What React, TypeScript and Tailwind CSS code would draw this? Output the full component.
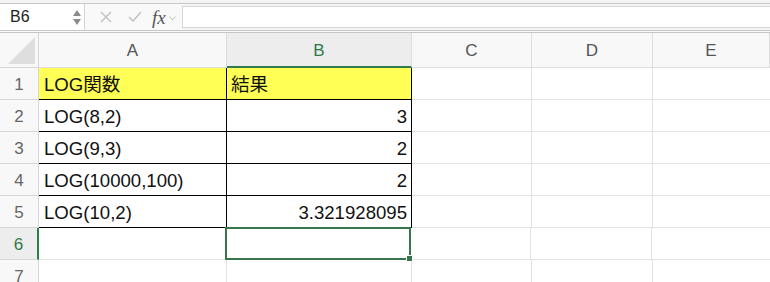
import React from "react";

const cols = [
  { key: "A", w: "w-[188px]" },
  { key: "B", w: "w-[185px]" },
  { key: "C", w: "w-[120px]" },
  { key: "D", w: "w-[121px]" },
  { key: "E", w: "flex-1" },
];

const rows: { a: string; b: string; head?: boolean }[] = [
  { a: "LOG関数", b: "結果", head: true },
  { a: "LOG(8,2)", b: "3" },
  { a: "LOG(9,3)", b: "2" },
  { a: "LOG(10000,100)", b: "2" },
  { a: "LOG(10,2)", b: "3.321928095" },
];

const font = "font-['Liberation_Sans','Noto_Sans_CJK_JP',sans-serif]";

function FormulaBar() {
  return (
    <div className="h-[33px] bg-[#f4f4f4] flex flex-col">
      <div className="h-[4px] border-b border-[#c9c9c9]" />
      <div className="flex h-[26px]">
        {/* 名前ボックス */}
        <div className="w-[85px] bg-white flex items-center border-r border-[#d4d4d4]">
          <span className="pl-[10px] text-[16px] text-[#222] flex-1">B6</span>
          <div className="flex flex-col items-center pr-[3px] gap-[3px]">
            <svg width="8" height="6" viewBox="0 0 8 6">
              <path d="M4 0 L8 6 L0 6 Z" fill="#8a8a8a" />
            </svg>
            <svg width="8" height="6" viewBox="0 0 8 6">
              <path d="M0 0 L8 0 L4 6 Z" fill="#8a8a8a" />
            </svg>
          </div>
        </div>
        <div className="w-[97px] flex items-center bg-[#f9f9f9]">
          <svg className="ml-[15px]" width="12" height="12" viewBox="0 0 12 12">
            <path d="M1 1 L11 11 M11 1 L1 11" stroke="#c4c4c4" strokeWidth="1.6" />
          </svg>
          <svg className="ml-[16px]" width="14" height="12" viewBox="0 0 14 12">
            <path d="M1 6 L5 10 L13 1" stroke="#c4c4c4" strokeWidth="1.6" fill="none" />
          </svg>
          <span className="ml-[10px] text-[19px] italic text-[#555] font-['Liberation_Serif',serif] leading-none">
            fx
          </span>
          <svg className="ml-[3px] mt-[3px]" width="7" height="5" viewBox="0 0 7 5">
            <path d="M0.5 0.5 L3.5 4 L6.5 0.5" stroke="#bdbdbd" strokeWidth="1" fill="none" />
          </svg>
        </div>
        <div className="flex-1 bg-white border border-[#d6d6d6] my-[2px] border-r-0" />
      </div>
      <div className="h-[3px] border-t border-b border-[#c6c6c6] bg-[#fafafa]" />
    </div>
  );
}

function HeaderRow() {
  return (
    <div className="flex h-[35px] bg-[#f8f8f8]">
      <div className="w-[39px] border-r border-b border-[#d6d6d6] flex items-end justify-end pr-[3px] pb-[3px]">
        <svg width="27" height="27" viewBox="0 0 27 27">
          <path d="M27 0 L27 27 L0 27 Z" fill="#dedede" />
        </svg>
      </div>
      {cols.map((c) =>
        c.key === "B" ? (
          <div
            key={c.key}
            className={`${c.w} bg-[#ededed] border-r border-[#dcdcdc] border-b-2 border-b-[#2e7a4a] flex items-center justify-center pt-[2px] text-[17px] text-[#2e7a4a]`}
          >
            {c.key}
          </div>
        ) : (
          <div
            key={c.key}
            className={`${c.w} border-r border-b border-[#dcdcdc] flex items-center justify-center pt-[2px] text-[17px] text-[#555]`}
          >
            {c.key}
          </div>
        )
      )}
    </div>
  );
}

function EmptyCells() {
  return (
    <>
      <div className="w-[120px] border-r border-b border-[#e2e2e2]" />
      <div className="w-[121px] border-r border-b border-[#e2e2e2]" />
      <div className="flex-1 border-b border-[#e2e2e2]" />
    </>
  );
}

export default function App() {
  return (
    <div className={`w-[770px] h-[282px] overflow-hidden bg-white ${font}`}>
      <FormulaBar />
      <HeaderRow />

      {rows.map((r, i) => (
        <div key={i} className="flex h-[32px]">
          <div className="w-[39px] bg-[#f8f8f8] border-r border-b border-[#d6d6d6] flex items-center justify-center text-[17px] text-[#666] pt-[2px]">
            {i + 1}
          </div>
          <div
            className={`w-[188px] border-r border-b border-black flex items-center pl-[5px] pt-[3px] text-[18.6px] text-[#111] ${
              r.head ? "bg-[#ffff55]" : ""
            }`}
          >
            {r.a}
          </div>
          <div
            className={`w-[185px] border-r border-b border-black flex items-center pt-[3px] text-[18.6px] text-[#111] ${
              r.head ? "bg-[#ffff55] pl-[4px]" : "justify-end pr-[4px]"
            }`}
          >
            {r.b}
          </div>
          <EmptyCells />
        </div>
      ))}

      {/* 6行目: B6 を選択中 */}
      <div className="flex h-[32px]">
        <div className="w-[39px] bg-[#ededed] border-r-2 border-r-[#2e7a4a] border-b border-b-[#d6d6d6] flex items-center justify-center text-[17px] text-[#2e7a4a] pt-[2px]">
          6
        </div>
        <div className="w-[187px] border-r border-b border-[#e2e2e2]" />
        <div className="w-[185px] border-r border-b border-[#e2e2e2] relative">
          <div className="absolute -left-[1px] -top-[1px] -right-[1px] -bottom-[1px] border-2 border-[#35774a]" />
          <div className="absolute -right-[3px] -bottom-[3px] w-[5px] h-[5px] bg-[#35774a] border border-white box-content" />
        </div>
        <EmptyCells />
      </div>

      <div className="flex h-[32px]">
        <div className="w-[39px] bg-[#f8f8f8] border-r border-b border-[#d6d6d6] flex items-center justify-center text-[17px] text-[#666] pt-[2px]">
          7
        </div>
        <div className="w-[188px] border-r border-b border-[#e2e2e2]" />
        <div className="w-[185px] border-r border-b border-[#e2e2e2]" />
        <EmptyCells />
      </div>
    </div>
  );
}
